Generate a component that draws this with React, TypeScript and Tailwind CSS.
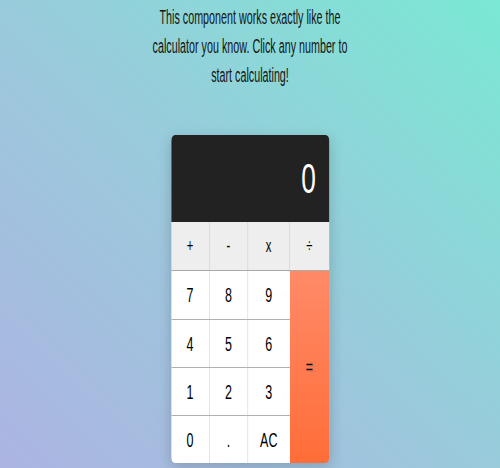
const ops = ["+", "-", "x", "÷"]
const rows = [
  ["7", "8", "9"],
  ["4", "5", "6"],
  ["1", "2", "3"],
  ["0", ".", "AC"],
]
const widths = ["w-[62px]", "w-[61px]", "w-[67px]", "w-[63px]"]

export default function App() {
  return (
    <div className="h-[468px] w-[500px] overflow-hidden bg-[linear-gradient(to_top_right,#acb4e2,#9cc8dc_45%,#7ae8d4)] font-['Liberation_Sans',Arial,sans-serif]">
      <div className="w-[800px] origin-top-left scale-x-[0.625]">
        <p className="mx-auto w-[368px] scale-x-[0.86] pt-[3px] text-center text-[20px] leading-[29px] text-[#151515]">
          This component works exactly like the calculator you know. Click any number to start calculating!
        </p>

        <div className="mx-auto mt-[45px] w-[253px] overflow-hidden rounded-[6px] shadow-[0_4px_18px_rgba(0,0,0,0.18)]">
          <div className="flex h-[87px] items-center justify-end bg-[#222222] pr-[21px] text-[42px] font-light text-white">
            0
          </div>
          <div className="flex h-[48px] bg-[#eeeeee]">
            {ops.map((op, i) => (
              <button
                key={op}
                className={`${widths[i]} border-r border-[#cfcfcf] text-[18px] text-black last:border-r-0`}
              >
                {op}
              </button>
            ))}
          </div>
          <div className="flex border-t border-[#a9a9a9]">
            <div className="flex flex-col">
              {rows.map((row, r) => (
                <div key={r} className={`flex h-[48px] bg-white ${r > 0 ? "border-t border-[#b0b0b0]" : ""}`}>
                  {row.map((key, i) => (
                    <button
                      key={key}
                      className={`${widths[i]} text-[20px] text-black ${i < 2 ? "border-r border-[#d4d4d4]" : ""}`}
                    >
                      {key}
                    </button>
                  ))}
                </div>
              ))}
            </div>
            <button className="w-[63px] bg-[linear-gradient(to_bottom,#ff8a68,#ff6d38)] text-[20px] text-black">=</button>
          </div>
        </div>
      </div>
    </div>
  )
}
